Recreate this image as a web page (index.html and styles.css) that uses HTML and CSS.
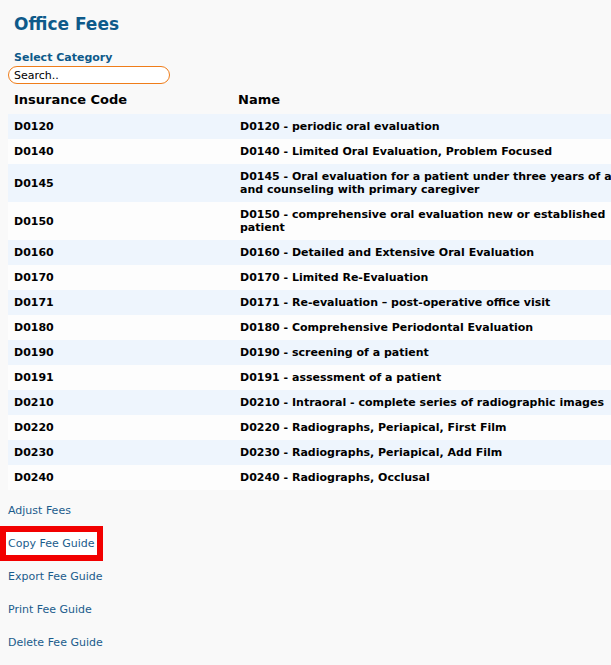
FILE: index.html
```html
<!DOCTYPE html>
<html lang="en">
<head>
    <meta charset="UTF-8">
    <meta name="viewport" content="width=device-width, initial-scale=1.0">
    <title>Office Fees</title>
    <link rel="stylesheet" href="styles.css">
</head>
<body>
    <div class="page">
        <h1 class="title">Office Fees</h1>
        <div class="category-label">Select Category</div>
        <input type="text" class="search" placeholder="Search..">

        <table class="fees">
            <thead>
                <tr>
                    <th class="col-code">Insurance Code</th>
                    <th class="col-name">Name</th>
                </tr>
            </thead>
            <tbody>
                <tr><td>D0120</td><td>D0120 - periodic oral evaluation</td></tr>
                <tr><td>D0140</td><td>D0140 - Limited Oral Evaluation, Problem Focused</td></tr>
                <tr><td>D0145</td><td>D0145 - Oral evaluation for a patient under three years of age and counseling with primary caregiver</td></tr>
                <tr><td>D0150</td><td>D0150 - comprehensive oral evaluation new or established patient</td></tr>
                <tr><td>D0160</td><td>D0160 - Detailed and Extensive Oral Evaluation</td></tr>
                <tr><td>D0170</td><td>D0170 - Limited Re-Evaluation</td></tr>
                <tr><td>D0171</td><td>D0171 - Re-evaluation – post-operative office visit</td></tr>
                <tr><td>D0180</td><td>D0180 - Comprehensive Periodontal Evaluation</td></tr>
                <tr><td>D0190</td><td>D0190 - screening of a patient</td></tr>
                <tr><td>D0191</td><td>D0191 - assessment of a patient</td></tr>
                <tr><td>D0210</td><td>D0210 - Intraoral - complete series of radiographic images</td></tr>
                <tr><td>D0220</td><td>D0220 - Radiographs, Periapical, First Film</td></tr>
                <tr><td>D0230</td><td>D0230 - Radiographs, Periapical, Add Film</td></tr>
                <tr><td>D0240</td><td>D0240 - Radiographs, Occlusal</td></tr>
            </tbody>
        </table>

        <div class="actions">
            <div class="action"><a href="#">Adjust Fees</a></div>
            <div class="action"><a href="#" class="highlight">Copy Fee Guide</a></div>
            <div class="action"><a href="#">Export Fee Guide</a></div>
            <div class="action"><a href="#">Print Fee Guide</a></div>
            <div class="action"><a href="#">Delete Fee Guide</a></div>
        </div>
    </div>
</body>
</html>
```

FILE: styles.css
```css
html, body {
    margin: 0;
    overflow: hidden;
}

body {
    font-family: "DejaVu Sans", Verdana, sans-serif;
    background-color: #f9f9f9;
    color: #000;
}

.page {
    padding: 8px;
    width: 680px;
}

.title {
    font-size: 17px;
    font-weight: bold;
    color: #0e5a8a;
    margin: 6px 0 0 6px;
    line-height: 20px;
}

.category-label {
    font-size: 11px;
    font-weight: bold;
    color: #0e5a8a;
    margin: 17px 0 0 6px;
    line-height: 14px;
}

.search {
    display: block;
    width: 162px;
    height: 18px;
    box-sizing: border-box;
    margin: 1px 0 0 0;
    padding: 0 5px;
    border: 1px solid #ef7d1a;
    border-radius: 9px;
    background: #fff;
    font-family: inherit;
    font-size: 11px;
    color: #000;
    outline: none;
}

.search::placeholder {
    color: #000;
}

.fees {
    border-collapse: collapse;
    table-layout: fixed;
    width: 638px;
    margin-top: 2px;
}

.fees th {
    text-align: left;
    font-size: 13px;
    font-weight: bold;
    padding: 6px 6px 7px;
    line-height: 15px;
}

.fees th.col-code {
    width: 214px;
}

.fees th.col-name {
    padding-left: 4px;
}

.fees td {
    font-size: 11px;
    font-weight: bold;
    padding: 6px 6px;
    line-height: 13px;
    vertical-align: middle;
}

.fees tbody tr:nth-child(odd) {
    background-color: #eef5fd;
}

.fees tbody tr:nth-child(even) {
    background-color: #fdfdfd;
}

.actions {
    margin-top: 4px;
}

.action {
    height: 33px;
    display: flex;
    align-items: center;
    font-size: 11px;
}

.action a {
    color: #1b5c8c;
    text-decoration: none;
    line-height: 13px;
}

.action a.highlight {
    display: inline-block;
    margin-left: -8px;
    border: 6px solid #f20000;
    padding: 5px 3px 5px 2px;
    background: #fff;
}
```
